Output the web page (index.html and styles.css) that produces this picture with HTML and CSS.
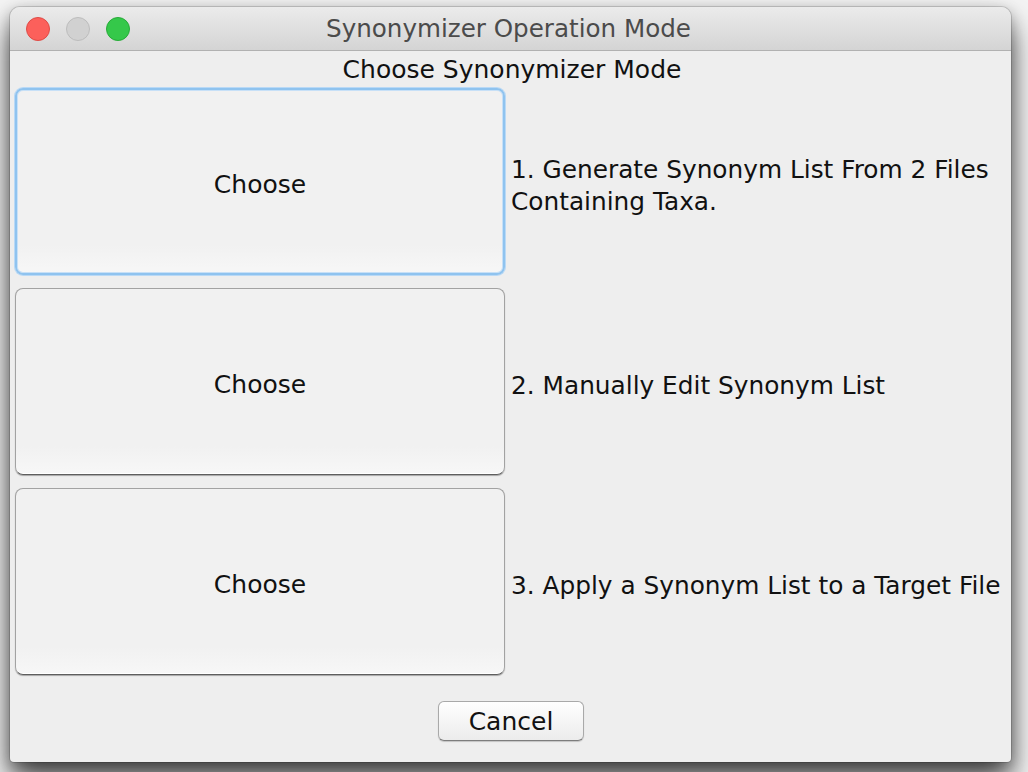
FILE: index.html
```html
<!DOCTYPE html>
<html>
<head>
<meta charset="utf-8">
<link rel="stylesheet" href="styles.css">
</head>
<body>
<div class="window">
  <div class="titlebar">
    <div class="lights">
      <span class="light red"></span>
      <span class="light gray"></span>
      <span class="light green"></span>
    </div>
    <div class="title">Synonymizer Operation Mode</div>
    <div class="spacer"></div>
  </div>
  <div class="content">
    <div class="heading">Choose Synonymizer Mode</div>
    <div class="rows">
      <button class="choose focused">Choose</button>
      <div class="label">1. Generate Synonym List From 2 Files<br>Containing Taxa.</div>
      <button class="choose">Choose</button>
      <div class="label">2. Manually Edit Synonym List</div>
      <button class="choose">Choose</button>
      <div class="label">3. Apply a Synonym List to a Target File</div>
    </div>
    <div class="footer">
      <button class="cancel">Cancel</button>
    </div>
  </div>
</div>
</body>
</html>
```
FILE: styles.css
```css
html, body {
  margin: 0;
  padding: 0;
}
body {
  width: 1028px;
  height: 772px;
  overflow: hidden;
  background: #f4f4f4;
  box-sizing: border-box;
  padding: 7px 17px 0 10px;
  font-family: "DejaVu Sans", "Liberation Sans", sans-serif;
}
.window {
  width: 1001px;
  height: 755px;
  background: #eeeeee;
  border-radius: 10px 10px 4px 4px;
  box-shadow: 0 0 0 1px rgba(0,0,0,0.14), 0 18px 30px rgba(0,0,0,0.7), 0 4px 14px rgba(0,0,0,0.25);
  display: flex;
  flex-direction: column;
  overflow: hidden;
}
.titlebar {
  height: 43px;
  flex: none;
  display: flex;
  align-items: center;
  background: linear-gradient(#ebebeb, #d4d4d4);
  border-bottom: 1px solid #b1b1b1;
}
.lights {
  width: 140px;
  display: flex;
  gap: 16px;
  padding-left: 16px;
  box-sizing: border-box;
}
.spacer {
  width: 140px;
}
.light {
  width: 24px;
  height: 24px;
  border-radius: 50%;
  box-sizing: border-box;
  display: block;
}
.red { background: #fc605b; border: 1px solid #de4b46; }
.gray { background: #d1d1d1; border: 1px solid #bcbcbc; }
.green { background: #35c84a; border: 1px solid #27aa38; }
.title {
  flex: 1;
  text-align: center;
  font-size: 24.6px;
  color: #4b4b4b;
  padding-right: 4px;
}
.content {
  flex: 1;
  display: flex;
  flex-direction: column;
  padding: 4px 0 0 5px;
}
.heading {
  text-align: center;
  font-size: 25px;
  line-height: 30px;
  height: 30px;
  color: #111;
  margin-bottom: 3px;
  padding-right: 2px;
}
.rows {
  display: grid;
  grid-template-columns: 490px auto;
  grid-auto-rows: 187px;
  column-gap: 6px;
  row-gap: 13px;
}
.choose {
  font-family: inherit;
  font-size: 25px;
  color: #111;
  background: linear-gradient(#f1f1f1, #f1f1f1 85%, #f7f7f7);
  border: 1px solid #a2a2a2;
  border-bottom-color: #5e5e5e;
  border-radius: 8px;
  box-shadow: inset 0 -1px 0 #ffffff, 0 1px 1px rgba(0,0,0,0.3);
  padding: 5px 0 0 0;
  margin: 0;
}
.choose.focused {
  border: 2px solid #8fc3ef;
  box-shadow: 0 0 0 1px #b9d9f6, inset 0 0 0 1px #c7e0f7;
}
.label {
  align-self: center;
  font-size: 24.8px;
  line-height: 32px;
  color: #111;
  white-space: nowrap;
  padding-top: 8px;
}
.footer {
  display: flex;
  justify-content: center;
  padding-top: 26px;
  padding-right: 4px;
}
.cancel {
  width: 146px;
  height: 40px;
  font-family: inherit;
  font-size: 25px;
  color: #111;
  background: linear-gradient(#ffffff, #f3f3f3 60%, #ececec);
  border: 1px solid #a9a9a9;
  border-bottom-color: #7d7d7d;
  border-radius: 6px;
  box-shadow: 0 1px 1px rgba(0,0,0,0.18);
  padding: 1px 0 0 0;
  margin: 0;
}
```
